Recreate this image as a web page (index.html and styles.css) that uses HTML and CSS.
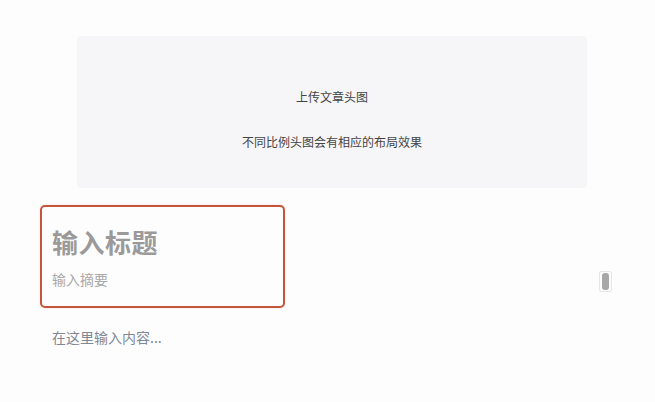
FILE: index.html
```html
<!DOCTYPE html>
<html lang="zh">
<head>
<meta charset="utf-8">
<link rel="stylesheet" href="styles.css">
</head>
<body>
<div class="page">
  <div class="cover">
    <div class="cover-title">上传文章头图</div>
    <div class="cover-sub">不同比例头图会有相应的布局效果</div>
  </div>
  <div class="head-box">
    <div class="title">输入标题</div>
    <div class="summary">输入摘要</div>
  </div>
  <div class="content">在这里输入内容...</div>
  <div class="thumb"><div class="thumb-inner"></div></div>
</div>
</body>
</html>
```
FILE: styles.css
```css
html, body {
  margin: 0;
  padding: 0;
  background: #fdfdfe;
}
.page {
  position: relative;
  width: 655px;
  height: 402px;
  box-sizing: border-box;
  padding-top: 36px;
  display: flex;
  flex-direction: column;
  font-family: "Noto Sans CJK SC", "Noto Sans", sans-serif;
}
.cover {
  margin-left: 77px;
  width: 510px;
  height: 152px;
  background: #f6f6f8;
  border-radius: 4px;
  display: flex;
  flex-direction: column;
  align-items: center;
  color: #444;
  font-size: 12px;
  line-height: 16px;
}
.cover-title {
  margin-top: 53px;
}
.cover-sub {
  margin-top: 29px;
}
.head-box {
  margin-top: 17px;
  margin-left: 40px;
  width: 245px;
  height: 103px;
  box-sizing: border-box;
  border: 2px solid #c3553a;
  border-radius: 5px;
  box-shadow: 0 0 2px rgba(230, 120, 80, 0.35);
  padding-left: 10px;
  display: flex;
  flex-direction: column;
}
.title {
  margin-top: 19px;
  font-size: 26px;
  line-height: 32px;
  font-weight: 700;
  color: #9a9a9a;
  letter-spacing: 0.5px;
}
.summary {
  margin-top: 12px;
  font-size: 14px;
  line-height: 18px;
  color: #a9a9a9;
}
.content {
  margin-top: 20px;
  margin-left: 52px;
  font-size: 14px;
  line-height: 18px;
  color: #7f8895;
}
.thumb {
  position: absolute;
  left: 599px;
  top: 271px;
  width: 13px;
  height: 21px;
  box-sizing: border-box;
  border: 1px solid #e6e6e6;
  border-radius: 2px;
  display: flex;
  align-items: center;
  justify-content: center;
}
.thumb-inner {
  width: 7px;
  height: 17px;
  background: #a8a8a8;
  border-radius: 3px;
}
```
